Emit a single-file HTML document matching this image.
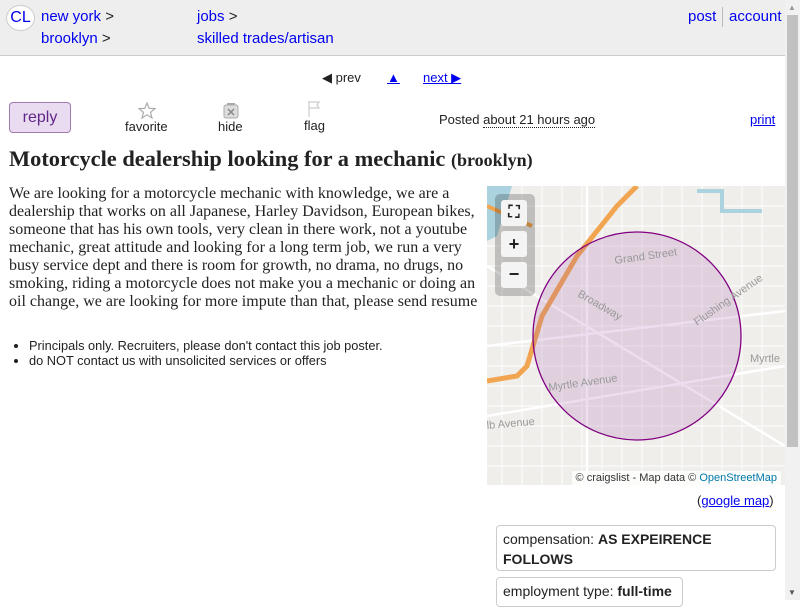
<!DOCTYPE html>
<html><head><meta charset="utf-8"><style>
*{margin:0;padding:0;box-sizing:border-box}
body{width:800px;height:600px;overflow:hidden;position:relative;background:#fff;font-family:"Liberation Sans",sans-serif;color:#222}
a{color:#00e}
.abs{position:absolute;white-space:nowrap}
.hdr{position:absolute;left:0;top:0;width:785px;height:56px;background:#eee;border-bottom:1px solid #ccc}
.hl{font-size:15px;color:#00e;text-decoration:none}
.sb{position:absolute;left:785px;top:0;width:15px;height:600px;background:#f1f1f1}
.thumb{position:absolute;left:787px;top:15px;width:11px;height:432px;background:#c1c1c1}
.box{position:absolute;border:1px solid #ccc;border-radius:4px;font-size:14px;padding:3px 6px;line-height:20px}
</style></head><body>
<div class="hdr"></div>
<div class="abs" style="left:6px;top:5px;width:29px;height:26px;border:1px solid #ccc;border-radius:50%;background:#fff;font-size:16px;color:#00e;text-align:center;line-height:24px">CL</div>
<div class="abs hl" style="left:41px;top:8px">new york <span style="color:#222">&gt;</span></div>
<div class="abs hl" style="left:41px;top:30px">brooklyn <span style="color:#222">&gt;</span></div>
<div class="abs hl" style="left:197px;top:8px">jobs <span style="color:#222">&gt;</span></div>
<div class="abs hl" style="left:197px;top:30px">skilled trades/artisan</div>
<div class="abs hl" style="left:688px;top:8px">post</div>
<div class="abs" style="left:722px;top:7px;width:1px;height:20px;background:#bbb"></div>
<div class="abs hl" style="left:729px;top:8px">account</div>

<div class="abs" style="left:322px;top:70px;font-size:13px">◀ prev</div>
<div class="abs" style="left:387px;top:70px;font-size:13px"><a href="#">▲</a></div>
<div class="abs" style="left:423px;top:70px;font-size:13px"><a href="#">next ▶</a></div>

<div class="abs" style="left:9px;top:102px;width:62px;height:31px;border:1px solid #a07ab0;border-radius:4px;background:#eadcf0;color:#61268a;font-size:16px;text-align:center;line-height:29px">reply</div>
<svg class="abs" style="left:138px;top:102px" width="18" height="17" viewBox="0 0 18 17"><polygon points="9,1 11.2,6.3 17,6.6 12.5,10.3 14,16 9,12.8 4,16 5.5,10.3 1,6.6 6.8,6.3" fill="none" stroke="#aaa" stroke-width="1.2"/></svg>
<div class="abs" style="left:125px;top:119px;font-size:13px">favorite</div>
<svg class="abs" style="left:222px;top:102px" width="18" height="17" viewBox="0 0 18 17"><rect x="2" y="3" width="14" height="13" rx="2" fill="#ddd" stroke="#aaa"/><rect x="5" y="1" width="8" height="2" fill="#aaa"/><path d="M6 7l6 6M12 7l-6 6" stroke="#888" stroke-width="1.5"/></svg>
<div class="abs" style="left:218px;top:119px;font-size:13px">hide</div>
<svg class="abs" style="left:307px;top:100px" width="16" height="18" viewBox="0 0 16 18"><path d="M2 1v16M2 2h10l-2 3 2 3H2" fill="none" stroke="#ccc" stroke-width="1.2"/></svg>
<div class="abs" style="left:304px;top:118px;font-size:13px">flag</div>
<div class="abs" style="left:439px;top:112px;font-size:13px">Posted <span style="border-bottom:1px dotted #222">about 21 hours ago</span></div>
<div class="abs" style="left:750px;top:112px;font-size:13px"><a href="#">print</a></div>

<div class="abs" style="left:9px;top:146px;font-family:'Liberation Serif',serif;font-weight:bold;font-size:22.4px;color:#222">Motorcycle dealership looking for a mechanic <span style="font-size:18px">(brooklyn)</span></div>
<div class="abs" style="left:9px;top:185px;font-family:'Liberation Serif',serif;font-size:16px;line-height:18px;color:#222">We are looking for a motorcycle mechanic with knowledge, we are a<br>dealership that works on all Japanese, Harley Davidson, European bikes,<br>someone that has his own tools, very clean in there work, not a youtube<br>mechanic, great attitude and looking for a long term job, we run a very<br>busy service dept and there is room for growth, no drama, no drugs, no<br>smoking, riding a motorcycle does not make you a mechanic or doing an<br>oil change, we are looking for more impute than that, please send resume</div>
<ul class="abs" style="left:29px;top:338px;font-size:12.8px;line-height:15px;color:#222">
<li>Principals only. Recruiters, please don't contact this job poster.</li>
<li>do NOT contact us with unsolicited services or offers</li></ul>

<div class="abs" style="left:487px;top:186px;width:298px;height:299px;background:#f0eeeb;overflow:hidden">
<svg width="298" height="299" style="position:absolute;left:0;top:0">
<rect width="298" height="299" fill="#f0eeeb"/>
<g stroke="#fff" stroke-width="1" opacity=".9">
<path d="M0 20H298M0 40H298M0 60H298M0 80H298M0 100H298M0 120H298M0 140H298M0 160H298M0 180H298M0 200H298M0 220H298M0 240H298M0 260H298M0 280H298"/>
<path d="M15 0V299M35 0V299M55 0V299M75 0V299M95 0V299M115 0V299M135 0V299M155 0V299M175 0V299M195 0V299M215 0V299M235 0V299M255 0V299M275 0V299"/></g>
<g stroke="#fff" stroke-width="2.5"><path d="M0 80L298 260M0 160L298 125M0 230L298 180M100 0V299"/></g>
<path d="M0 0L25 0 10 50 0 55Z" fill="#aad3df"/>
<path d="M210 5h25v20h40" stroke="#aad3df" stroke-width="4" fill="none"/>
<path d="M150 0L130 20 90 70 55 130 40 180 30 190 0 195" stroke="#f1a550" stroke-width="5" fill="none"/>
<path d="M0 20L45 40" stroke="#f1a550" stroke-width="4"/>
<circle cx="150" cy="150" r="104" fill="rgba(160,90,170,0.2)" stroke="#800080" stroke-width="1.3"/>
<g font-family="Liberation Sans" font-size="11" fill="#999">
<text x="128" y="78" transform="rotate(-8 128 78)">Grand Street</text>
<text x="90" y="110" transform="rotate(30 90 110)">Broadway</text>
<text x="210" y="140" transform="rotate(-35 210 140)">Flushing Avenue</text>
<text x="62" y="205" transform="rotate(-8 62 205)">Myrtle Avenue</text>
<text x="263" y="176">Myrtle</text>
<text x="0" y="243" transform="rotate(-5 0 243)">lb Avenue</text></g>
</svg>
<div style="position:absolute;left:8px;top:8px;width:40px;height:102px;background:rgba(0,0,0,.2);border-radius:5px"></div>
<div style="position:absolute;left:14px;top:14px;width:26px;height:26px;background:#f4f4f4;border-radius:3px;font-size:16px;text-align:center;line-height:26px;font-weight:bold">⛶</div>
<div style="position:absolute;left:14px;top:45px;width:26px;height:26px;background:#f4f4f4;border-radius:3px;font-size:18px;text-align:center;line-height:26px;font-weight:bold">+</div>
<div style="position:absolute;left:14px;top:76px;width:26px;height:26px;background:#f4f4f4;border-radius:3px;font-size:18px;text-align:center;line-height:24px;font-weight:bold">−</div>
<div style="position:absolute;right:4px;bottom:0;background:rgba(255,255,255,.8);font-size:11px;padding:1px 4px;color:#333">© craigslist - Map data © <span style="color:#0078a8">OpenStreetMap</span></div>
</div>
<div class="abs" style="left:697px;top:493px;font-size:13px">(<a href="#">google map</a>)</div>
<div class="box" style="left:496px;top:525px;width:280px;height:46px">compensation: <b>AS EXPEIRENCE FOLLOWS</b></div>
<div class="box" style="left:496px;top:577px;width:187px;height:30px">employment type: <b>full-time</b></div>
<div class="sb"></div><div class="thumb"></div>
<div class="abs" style="left:788px;top:3px;font-size:8px;color:#999">▲</div>
<div class="abs" style="left:788px;top:588px;font-size:8px;color:#555">▼</div>
</body></html>
